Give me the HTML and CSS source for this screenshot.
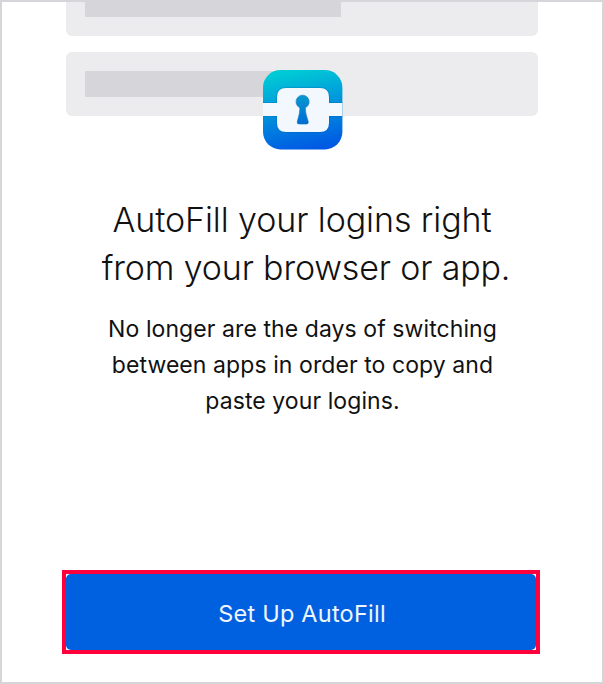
FILE: index.html
```html
<!DOCTYPE html>
<html lang="en">
<head>
<meta charset="utf-8">
<title>Set Up AutoFill</title>
<link rel="stylesheet" href="styles.css">
</head>
<body>
<main class="screen">
  <div class="preview">
    <div class="card card-cut"><div class="bar bar-long"></div></div>
    <div class="card"><div class="bar"></div></div>
    <svg class="logo" viewBox="0 0 80 80" aria-hidden="true">
      <defs>
        <linearGradient id="tile" x1="0.4" y1="0" x2="0.6" y2="1">
          <stop offset="0" stop-color="#00cbd5"/>
          <stop offset="0.5" stop-color="#0090dc"/>
          <stop offset="1" stop-color="#0058e4"/>
        </linearGradient>
        <linearGradient id="key" x1="0" y1="0" x2="0" y2="1">
          <stop offset="0" stop-color="#0799ce"/>
          <stop offset="1" stop-color="#006cd4"/>
        </linearGradient>
        <clipPath id="shape"><rect x="0" y="0" width="79.4" height="79.4" rx="17.5"/></clipPath>
      </defs>
      <g clip-path="url(#shape)">
        <rect width="80" height="80" fill="url(#tile)"/>
        <path d="M0 33H14V27Q14 18 23 18H57Q66 18 66 27V33H80V46H66V53Q66 62 57 62H23Q14 62 14 53V46H0Z" fill="none" stroke="#0058a8" stroke-opacity=".35" stroke-width="1.6"/>
        <path d="M0 33H14V27Q14 18 23 18H57Q66 18 66 27V33H80V46H66V53Q66 62 57 62H23Q14 62 14 53V46H0Z" fill="#f2f8fe"/>
        <path d="M36.9 37.8A6.6 6.6 0 1 1 42.3 37.8Q42.2 43 45.2 51.5Q45.7 54 43.5 54H36Q33.8 54 34.3 51.5Q37 43 36.9 37.8Z" fill="url(#key)" stroke="#0870b8" stroke-width=".6"/>
      </g>
    </svg>
  </div>
  <h1 class="title"><span class="title-a">AutoFill your logins right</span><span class="title-b">from your browser or app.</span></h1>
  <p class="text"><span>No longer are the days of switching</span><span>between apps in order to copy and</span><span>paste your logins.</span></p>
  <div class="focus"><button class="setup" type="button"><span>Set Up AutoFill</span></button></div>
</main>
</body>
</html>
```
FILE: styles.css
```css
* { box-sizing: border-box; }
body { margin: 0; background: #fff; font-family: Inter, sans-serif; color: #111; }
.screen {
  width: 604px; height: 684px; border: 2px solid #d6d5da;
  display: flex; flex-direction: column; align-items: center; overflow: hidden;
}
.preview {
  position: relative; width: 472px; height: 147px; flex: none;
  display: flex; flex-direction: column; gap: 16px;
}
.card { height: 64px; padding: 19px; border-radius: 6px; background: #ececee; flex: none; }
.card-cut { height: 34px; padding-top: 0; border-radius: 0 0 6px 6px; }
.bar { width: 210px; height: 26px; background: #d6d5da; }
.bar-long { width: 256px; height: 15px; }
.logo { position: absolute; left: 197px; top: 68px; width: 80px; height: 80px; }
.title { margin: 47px 0 0; font-size: 34px; line-height: 48px; font-weight: 300; text-align: center; white-space: nowrap; }
.title span, .text span { display: block; }
.title-a { letter-spacing: -.08px; }
.title-b { letter-spacing: -.16px; padding-left: 8px; }
.text { margin: 19px 0 0; padding-left: 1px; font-size: 23px; line-height: 36px; letter-spacing: .08px; text-align: center; white-space: nowrap; }
.focus { align-self: flex-start; width: 478px; height: 84px; margin: auto 0 28px 60px; padding: 4px; background: linear-gradient(#fff, #fff) content-box, #ff003c; flex: none; }
.setup {
  display: block; width: 100%; height: 100%; border: 0; border-radius: 5px; padding: 3px 0 0 2px;
  background: #0061e0; color: #f0f6ff; font: 400 23.5px/36px Inter, sans-serif; letter-spacing: .23px;
}
```
